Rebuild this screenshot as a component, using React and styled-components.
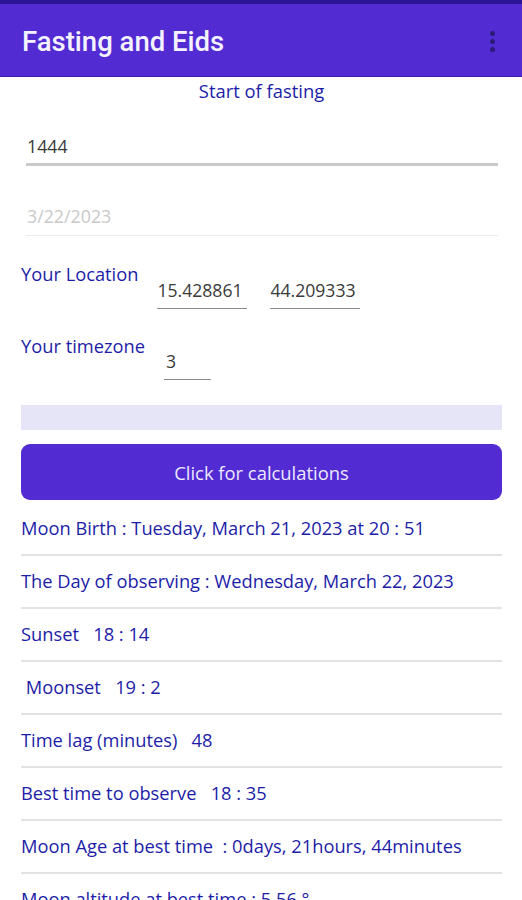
import React from "react";
import styled, { createGlobalStyle } from "styled-components";

const GlobalStyle = createGlobalStyle`
  body {
    margin: 0;
    background: #ffffff;
    font-family: "Open Sans", "Noto Sans", sans-serif;
  }
`;

const results = [
  "Moon Birth : Tuesday, March 21, 2023 at 20 : 51",
  "The Day of observing : Wednesday, March 22, 2023",
  "Sunset   18 : 14",
  " Moonset   19 : 2",
  "Time lag (minutes)   48",
  "Best time to observe   18 : 35",
  "Moon Age at best time  : 0days, 21hours, 44minutes",
  "Moon altitude at best time : 5.56 °",
];

const App = () => {
  return (
    <Page>
      <GlobalStyle />
      <StatusBar />
      <Header>
        <Title>Fasting and Eids</Title>
        <Menu aria-label="menu">
          <Dot />
          <Dot />
          <Dot />
        </Menu>
      </Header>
      <Content>
        <Heading>Start of fasting</Heading>
        <Entry value="1444" readOnly />
        <Entry value="3/22/2023" readOnly muted />
        <FieldRow>
          <Label>Your Location</Label>
          <SmallEntry value="15.428861" readOnly w={90} />
          <SmallEntry value="44.209333" readOnly w={90} />
        </FieldRow>
        <FieldRow>
          <Label>Your timezone</Label>
          <SmallEntry value="3" readOnly w={47} pad={2} short />
        </FieldRow>
        <Progress />
        <Button>Click for calculations</Button>
        <List>
          {results.map((r, i) => (
            <Item key={i}>{r}</Item>
          ))}
        </List>
      </Content>
    </Page>
  );
};

export default App;

const Page = styled.div`
  width: 522px;
  height: 900px;
  overflow: hidden;
  background: #fff;
`;

const StatusBar = styled.div`
  height: 4px;
  background: #2b1496;
`;

const Header = styled.header`
  height: 72px;
  box-sizing: border-box;
  background: #522bd3;
  display: flex;
  align-items: center;
  justify-content: space-between;
  padding: 3px 27px 0 22px;
  box-shadow: 0 1px 0 #3a1ca8;
`;

const Title = styled.h1`
  margin: 0;
  font-family: Roboto, "Noto Sans", sans-serif;
  font-weight: 500;
  font-size: 27.5px;
  color: #f4f2ff;
`;

const Menu = styled.div`
  display: flex;
  flex-direction: column;
  gap: 3px;
`;

const Dot = styled.span`
  width: 5px;
  height: 5px;
  border-radius: 50%;
  background: #2c1a7a;
`;

const Content = styled.main`
  padding: 0 20px 0 21px;
  display: flex;
  flex-direction: column;
`;

const Heading = styled.div`
  text-align: center;
  color: #1d1da8;
  font-size: 18.4px;
  line-height: 24px;
  margin-top: 3px;
`;

const Entry = styled.input`
  font-family: "Open Sans", "Noto Sans", sans-serif;
  font-size: 17.8px;
  line-height: 24px;
  color: ${(p) => (p.muted ? "#c9c9c9" : "#3a3a3a")};
  border: none;
  border-bottom: ${(p) => (p.muted ? "1px solid #ececec" : "3px solid #cacaca")};
  outline: none;
  background: transparent;
  padding: 0 0 ${(p) => (p.muted ? "7px" : "5px")} 1px;
  margin: ${(p) => (p.muted ? "38px 4px 0 5px" : "31px 4px 0 5px")};
`;

const FieldRow = styled.div`
  display: flex;
  align-items: flex-start;
  margin-top: 26px;

  & + & {
    margin-top: 25px;
  }
`;

const Label = styled.div`
  color: #1d1da8;
  font-size: 18.3px;
  line-height: 24px;
  white-space: nowrap;
  margin-right: 19px;
`;

const SmallEntry = styled.input`
  font-family: "Open Sans", "Noto Sans", sans-serif;
  font-size: 17.6px;
  line-height: 24px;
  color: #3a3a3a;
  width: ${(p) => p.w}px;
  box-sizing: border-box;
  border: none;
  border-bottom: 1px solid #8a8a8a;
  outline: none;
  background: transparent;
  padding: 0 0 6px ${(p) => p.pad || 0}px;
  margin-top: ${(p) => (p.short ? 15 : 16)}px;
  margin-right: 23px;
`;

const Progress = styled.div`
  height: 25px;
  background: #e6e5f8;
  margin: 25px 0 0;
`;

const Button = styled.button`
  margin-top: 14px;
  height: 56px;
  border: none;
  border-radius: 9px;
  background: #522bd3;
  color: #ece8ff;
  font-family: "Open Sans", "Noto Sans", sans-serif;
  font-size: 18.4px;
  cursor: pointer;
`;

const List = styled.div`
  display: flex;
  flex-direction: column;
  margin-top: 3px;
`;

const Item = styled.div`
  color: #1d1da8;
  font-size: 18.3px;
  line-height: 24px;
  padding: 13px 0 14px;
  border-bottom: 2px solid #e3e3e3;
  white-space: pre;
`;
